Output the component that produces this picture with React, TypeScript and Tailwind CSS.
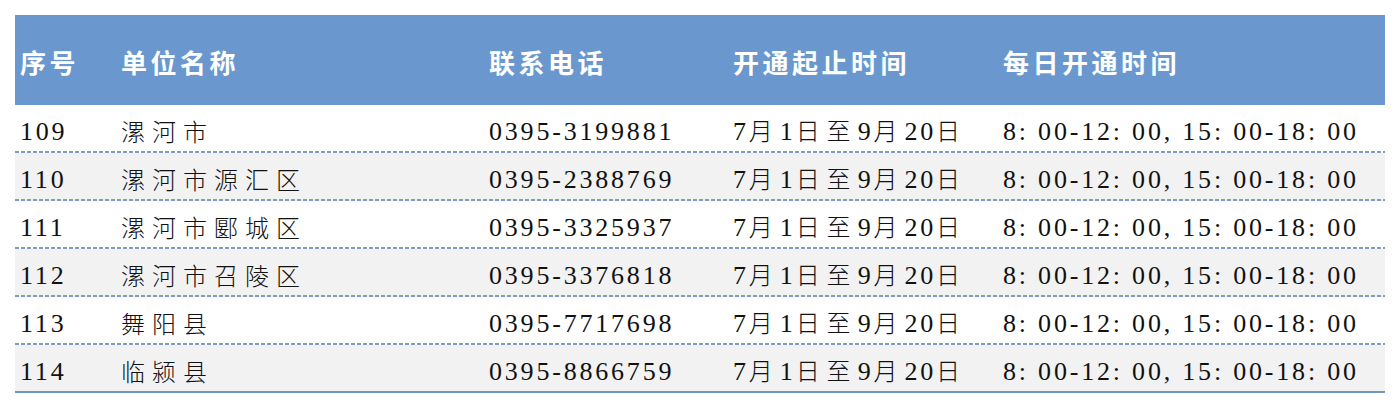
import React from "react";

const rows = [
  ["109", "漯河市", "0395-3199881"],
  ["110", "漯河市源汇区", "0395-2388769"],
  ["111", "漯河市郾城区", "0395-3325937"],
  ["112", "漯河市召陵区", "0395-3376818"],
  ["113", "舞阳县", "0395-7717698"],
  ["114", "临颍县", "0395-8866759"],
];

const cols = "grid grid-cols-[101px_368px_244px_270px_1fr]";

// split mixed text so the CJK glyphs and the latin digits get their own spacing
function Mixed({ text }: { text: string }) {
  const parts = text.match(/[\u4e00-\u9fff]+|[^\u4e00-\u9fff]+/g) ?? [];
  return (
    <>
      {parts.map((p, i) =>
        /[\u4e00-\u9fff]/.test(p) ? (
          <span key={i} className="font-['Noto_Sans_CJK_SC'] font-light text-[24px] tracking-[7px]">
            {p}
          </span>
        ) : (
          <span key={i} className="font-['Liberation_Serif'] text-[26px] tracking-[2.8px]">
            {p}
          </span>
        )
      )}
    </>
  );
}

export default function App() {
  return (
    <div className="p-[15px] bg-white min-h-[410px]">
      {/* header */}
      <div
        className={`${cols} h-[90px] items-center bg-[#6a98ce] text-white font-bold text-[26px] tracking-[3.5px] font-['Noto_Sans_CJK_SC'] pt-[2px]`}
      >
        <div className="pl-[5px]">序号</div>
        <div className="pl-[5px]">单位名称</div>
        <div className="pl-[5px]">联系电话</div>
        <div className="pl-[5px]">开通起止时间</div>
        <div className="pl-[5px]">每日开通时间</div>
      </div>

      {rows.map((r, i) => (
        <div key={r[0]} className={i % 2 === 1 ? "bg-[#f2f2f2]" : "bg-white"}>
          <div className={`${cols} h-[46px] items-center text-[#111] pt-[6px] whitespace-nowrap`}>
            <div className="pl-[5px]">
              <Mixed text={r[0]} />
            </div>
            <div className="pl-[5px]">
              <Mixed text={r[1]} />
            </div>
            <div className="pl-[5px]">
              <Mixed text={r[2]} />
            </div>
            <div className="pl-[5px]">
              <Mixed text="7月1日至9月20日" />
            </div>
            <div className="pl-[5px]">
              <Mixed text="8: 00-12: 00, 15: 00-18: 00" />
            </div>
          </div>
          {i < rows.length - 1 ? (
            <div className="h-[2px] bg-[linear-gradient(to_right,#7d9ec2_4px,transparent_4px)] bg-[length:6px_2px]" />
          ) : (
            <div className="h-[2px] bg-[#7096bd]" />
          )}
        </div>
      ))}
    </div>
  );
}
